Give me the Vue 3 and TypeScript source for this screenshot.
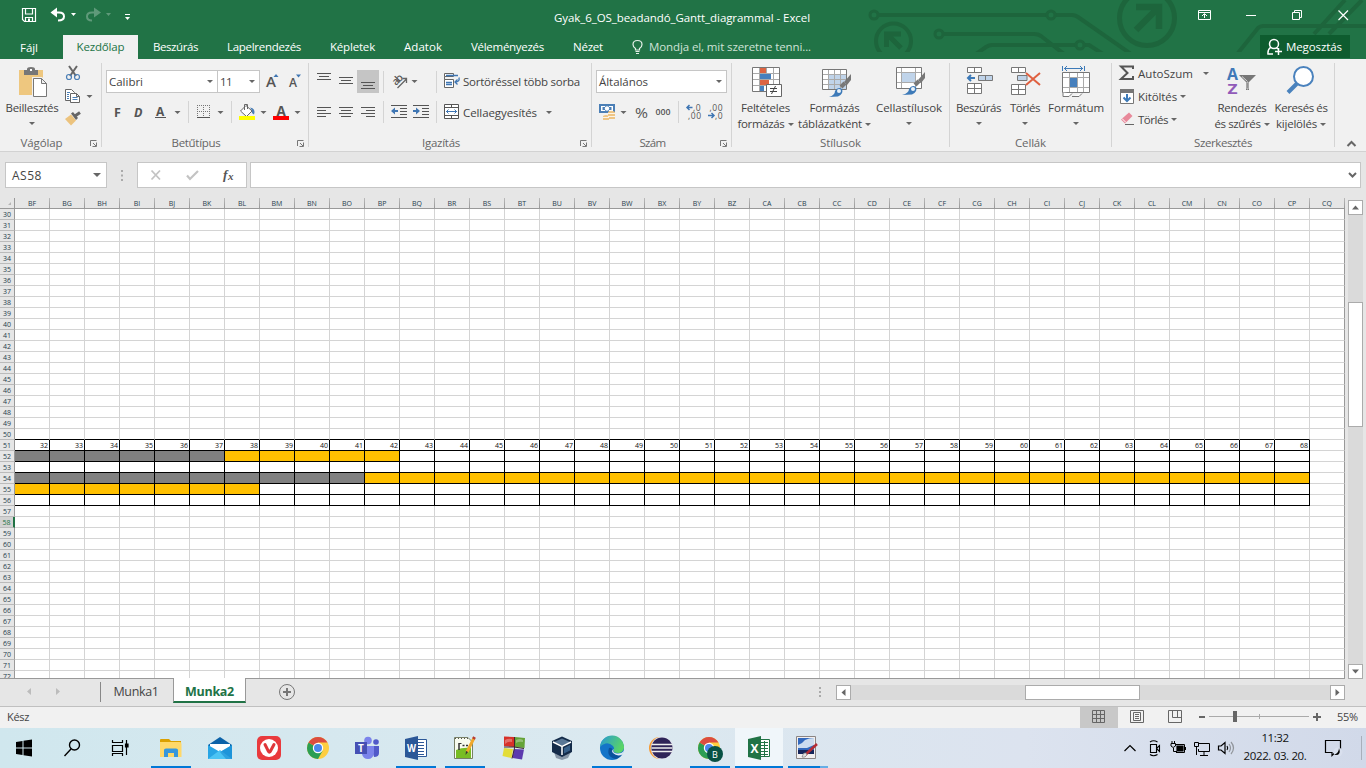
<script setup lang="ts">
import type { Directive } from 'vue'

/* Tracks a label so that it takes the given width in pixels. */
const vFit: Directive<HTMLElement, number> = {
  mounted(el, { value }) {
    const natural = el.getBoundingClientRect().width
    const count = (el.textContent ?? '').trim().length
    el.style.letterSpacing = `${(value - natural) / count}px`
  },
}

/* Icons are drawn in window coordinates; box() cuts the view for one icon. */
const box = (x: number, y: number, width: number, height: number) => ({
  viewBox: `${x} ${y} ${width} ${height}`,
  width,
  height,
})

const columnName = (n: number): string =>
  n > 26 ? columnName(Math.floor((n - 1) / 26)) + columnName(((n - 1) % 26) + 1) : String.fromCharCode(64 + n)

const columns = Array.from({ length: 38 }, (_, i) => columnName(58 + i))
const rows = Array.from({ length: 43 }, (_, i) => 30 + i)

type Span = { from: number; to: number; kind: string }
const bars: Record<number, Span[]> = {
  52: [{ from: 0, to: 5, kind: 'wait' }, { from: 6, to: 10, kind: 'run' }],
  54: [{ from: 0, to: 9, kind: 'wait' }, { from: 10, to: 36, kind: 'run' }],
  55: [{ from: 0, to: 6, kind: 'run' }],
}

const cellClass = (row: number, col: number) => {
  const span = (bars[row] ?? []).find((s) => col >= s.from && col <= s.to)
  return [
    span?.kind,
    { framed: row >= 51 && row <= 56 && col < 37, above: row === 50 && col < 37 },
  ]
}
const cellText = (row: number, col: number) => (row === 51 && col < 37 ? String(32 + col) : '')

const tabs = [
  { name: 'Beszúrás', width: 45, slot: 74 },
  { name: 'Lapelrendezés', width: 74, slot: 103 },
  { name: 'Képletek', width: 45, slot: 74 },
  { name: 'Adatok', width: 38, slot: 67 },
  { name: 'Véleményezés', width: 73, slot: 102 },
  { name: 'Nézet', width: 30, slot: 59 },
]
</script>

<template>
  <div class="window">
    <header class="top">
      <svg class="circuit" v-bind="box(860, 0, 506, 52)">
        <g fill="none" stroke="#1d653c" stroke-width="4">
          <circle cx="874" cy="15" r="4" stroke-width="3" />
          <path d="M878 15H1047M1055 15H1072Q1075 15 1078 17L1131 54" />
          <circle cx="1051" cy="15" r="4" stroke-width="3" />
          <circle cx="939" cy="34" r="4" stroke-width="3" />
          <path d="M943 34H1034Q1038 34 1041 36L1064 54" />
          <path d="M976 54L986 47Q989 45 992 45H1076M1084 45H1089L1103 54" />
          <circle cx="1080" cy="45" r="4" stroke-width="3" />
          <circle cx="893.500" cy="41" r="17.500" />
          <path d="M886.500 47V34H901M887 34L901 48" stroke-width="5" />
          <circle cx="1147" cy="18" r="27.500" stroke-width="5" />
          <path d="M1136 7H1159V29M1159 7L1136 30" stroke-width="6.500" />
          <path d="M1238 53L1258 28Q1260 26 1263 26H1366M1314 34L1345 0M1329 34L1362 0" />
        </g>
      </svg>

      <div class="titlebar">
        <div class="quick">
          <svg v-bind="box(20, 6, 22, 20)"><path d="M22.500 8.500H35.500V21.500H24.500L22.500 19.500ZM25.500 8.500V14H32.500V8.500M25.500 21V17.500H32.500V21" fill="none" stroke="#fff" stroke-width="1.200" /><path d="M28 18.500H30V21H28Z" fill="#fff" /></svg>
          <svg v-bind="box(42, 6, 40, 20)"><path d="M52 12.500H59Q64 12.500 64 16.500Q64 20.500 58 20.500" fill="none" stroke="#fff" stroke-width="2" /><path d="M50.500 12.500L57 7.500V17.500Z" fill="#fff" /><path d="M71 13H76L73.500 16Z" fill="#fff" /></svg>
          <svg v-bind="box(82, 6, 34, 20)" class="faded"><path d="M98 12.500H92Q87 12.500 87 16.500Q87 20.500 92 20.500" fill="none" stroke="#fff" stroke-width="2" /><path d="M101 12.500L94 7.500V17.500Z" fill="#fff" /><path d="M106 13H111L108.500 16Z" fill="#fff" /></svg>
          <svg v-bind="box(116, 6, 20, 20)"><path d="M125 14.500H130" stroke="#fff" /><path d="M125 17H130L127.500 20Z" fill="#fff" /></svg>
        </div>
        <div class="caption-title"><span v-fit="256" class="t">Gyak_6_OS_beadandó_Gantt_diagrammal - Excel</span></div>
        <svg v-bind="box(1190, 0, 176, 34)" class="window-buttons" fill="none" stroke="#fff">
          <path d="M1198.500 10.500H1210.500V19.500H1198.500ZM1198.500 12.500H1210.500M1204.500 18V14M1202 16L1204.500 13.500L1207 16" />
          <path d="M1246 15.500H1256" />
          <path d="M1292.500 12.500H1299.500V19.500H1292.500ZM1294.500 12V10.500H1301.500V17.500H1300" />
          <path d="M1338.500 10.500L1348 20M1348 10.500L1338.500 20" stroke-width="1.200" />
        </svg>
      </div>

      <nav class="tabs">
        <div class="tab file"><span v-fit="18" class="t">Fájl</span></div>
        <div class="tab active"><span v-fit="48" class="t">Kezdőlap</span></div>
        <div v-for="tab in tabs" :key="tab.name" class="tab plain" :style="{ width: tab.slot + 'px' }">
          <span v-fit="tab.width" class="t">{{ tab.name }}</span>
        </div>
        <div class="tell">
          <svg v-bind="box(630, 37, 15, 18)" fill="none" stroke="#e4f0e8" stroke-width="1.200"><path d="M635.500 49V47.500Q633 46 633 43.500Q633 39.500 637.500 39.500Q642 39.500 642 43.500Q642 46 639.500 47.500V49ZM635.500 50.500H639.500M636 52.500H639" /></svg>
          <span v-fit="162" class="t">Mondja el, mit szeretne tenni...</span>
        </div>
        <div class="share">
          <svg v-bind="box(1265, 37, 19, 20)" fill="none" stroke="#fff" stroke-width="1.500"><circle cx="1274" cy="44" r="4.500" /><path d="M1271 47Q1267.500 49.500 1268 54H1273M1276.500 48L1278 49M1278.500 48V55M1275 51.500H1282" /></svg>
          <span v-fit="56" class="t">Megosztás</span>
        </div>
      </nav>
    </header>

    <section class="ribbon">
      <div class="group clipboard">
        <div class="body">
          <div class="big paste">
            <svg v-bind="box(17, 65, 34, 32)">
              <path d="M21 70H45V95H21Z" fill="#eec77f" /><path d="M26 70H40V75H26Z" fill="#777" /><path d="M29 71V69Q29 67 33 67Q37 67 37 69V71" fill="#777" /><path d="M32 69H34V71H32Z" fill="#fff" />
              <path d="M34 77H44L50 83V98H34Z" fill="#f1f1f1" /><path d="M35.500 78.500H43.500L48.500 83.500V96.500H35.500ZM43.500 78.500V83.500H48.500" fill="#fff" stroke="#777" />
            </svg>
            <span v-fit="53" class="t">Beillesztés</span><i class="caret low" />
          </div>
          <div class="small-stack">
            <svg v-bind="box(64, 62, 34, 22)" fill="none"><path d="M69 66L76 76M77 66L70 76" stroke="#666" stroke-width="2" /><circle cx="69" cy="77" r="2.500" stroke="#4b7fb6" stroke-width="1.200" /><circle cx="77" cy="77" r="2.500" stroke="#4b7fb6" stroke-width="1.200" /></svg>
            <svg v-bind="box(64, 85, 34, 22)"><path d="M65.500 89.500H71.500L74.500 92.500V100.500H65.500Z" fill="#fff" stroke="#666" /><path d="M70.500 93.500H76.500L79.500 96.500V102.500H70.500ZM76.500 93.500V96.500H79.500" fill="#fff" stroke="#666" /><path d="M67 92.500H70M67 94.500H69M67 96.500H69M67 98.500H69M72.500 97.500H77.500M72.500 99.500H77.500" stroke="#4b7fb6" /><path d="M86.500 95H92.500L89.500 98Z" fill="#666" /></svg>
            <svg v-bind="box(64, 108, 34, 22)"><path d="M65 119L71 114.500L76 120.500L71 125.500Z" fill="#ecc37e" /><path d="M71 113.500L73 112L78 118L76 120Z" fill="#666" /><path d="M75 116L80 112.500" stroke="#666" stroke-width="3" /></svg>
          </div>
        </div>
        <div class="foot"><span><b v-fit="42" class="t">Vágólap</b></span><svg v-bind="box(85, 138, 16, 11)"><path d="M90.500 146V140.500H96.500M93 143L96 146M96.500 142.500V146.500H92.500" fill="none" stroke="#777" /></svg></div>
      </div>

      <div class="group font">
        <div class="body lines">
          <div class="line">
            <div class="combo family"><span v-fit="34" class="t">Calibri</span><i class="caret" /></div>
            <div class="combo size"><span v-fit="12" class="t">11</span><i class="caret" /></div>
            <svg v-bind="box(260, 70, 46, 24)"><text x="266" y="87" font-size="14" font-weight="600" textLength="10" lengthAdjust="spacingAndGlyphs">A</text><path d="M273.500 77L276 74L278.500 77Z" fill="#3f76b3" /><text x="289" y="87" font-size="12" font-weight="600" textLength="8" lengthAdjust="spacingAndGlyphs">A</text><path d="M296 74.500H301L298.500 77.500Z" fill="#3f76b3" /></svg>
          </div>
          <div class="line second">
            <svg v-bind="box(106, 100, 76, 24)"><text x="114" y="116.500" font-size="12.500" font-weight="700">F</text><text x="134" y="116.500" font-size="12.500" font-weight="700" font-style="italic">D</text><text x="156" y="116" font-size="12" font-weight="700">A</text><path d="M155 117.500H166" stroke="#555" /><path d="M174.500 111H180.500L177.500 114Z" fill="#666" /></svg>
            <i class="rule r6" />
            <svg v-bind="box(189, 100, 42, 24)"><path d="M197.500 105V117M203.500 105V117M209.500 105V117M197 105.500H210M197 111.500H210" stroke="#777" stroke-dasharray="1 1" /><path d="M197 117.500H210" stroke="#555" /><path d="M217.500 111H223.500L220.500 114Z" fill="#666" /></svg>
            <i class="rule" />
            <svg v-bind="box(232, 100, 75, 24)"><path d="M246 105.500L252 111L246.500 116.500L240.500 111ZM244.500 110V104.500H247.500V109" fill="#fff" stroke="#666" /><path d="M250 107.500Q256 108.500 254 114.500Q251 113 252 110.500Z" fill="#4b7fb6" /><path d="M239 116H255V120H239Z" fill="#ffff00" /><path d="M260.500 111H266.500L263.500 114Z" fill="#666" /><text x="276.500" y="115.500" font-size="13.500" font-weight="700">A</text><path d="M273 116H289V120H273Z" fill="#f00" /><path d="M294.500 111H300.500L297.500 114Z" fill="#666" /></svg>
          </div>
        </div>
        <div class="foot"><span><b v-fit="49" class="t">Betűtípus</b></span><svg v-bind="box(292, 138, 16, 11)"><path d="M297.500 146V140.500H303.500M300 143L303 146M303.500 142.500V146.500H299.500" fill="none" stroke="#777" /></svg></div>
      </div>

      <div class="group align">
        <div class="body lines">
          <div class="line">
            <svg v-bind="box(309, 70, 74, 24)"><path d="M357 70H379V93H357Z" fill="#c5c5c5" /><path d="M317 73.500H331M319 76.500H329M317 79.500H331M339 77.500H353M341 80.500H351M339 83.500H353M361 82.500H375M363 85.500H373M361 88.500H375" stroke="#555" /></svg>
            <i class="rule" />
            <svg v-bind="box(384, 70, 52, 24)"><text transform="translate(396 86) rotate(-45)" font-size="10.500" font-weight="600" textLength="11">ab</text><path d="M397.500 88L406.500 79M402.500 78.500H406.500V83" fill="none" stroke="#666" stroke-width="1.300" /><path d="M411.500 80H417.500L414.500 83Z" fill="#666" /></svg>
            <i class="rule" />
            <svg v-bind="box(437, 70, 26, 24)"><path d="M444.500 73.500H453.500V76.500H444.500ZM444.500 79.500H453.500V87.500H444.500ZM444.500 76.500V79.500" fill="#fff" stroke="#666" /><path d="M446 75.500H458M446 82.500H452M446 84.500H452M459 77.500Q460 82 455 82M457.500 79.500L455 82L457.500 84.500" fill="none" stroke="#3f76b3" stroke-width="1.300" /></svg>
            <span v-fit="117" class="t">Sortöréssel több sorba</span>
          </div>
          <div class="line second">
            <svg v-bind="box(309, 100, 74, 24)"><path d="M317 107.500H331M317 110.500H326M317 113.500H331M317 116.500H326M339 107.500H353M341 110.500H351M339 113.500H353M341 116.500H351M361 107.500H375M366 110.500H375M361 113.500H375M366 116.500H375" stroke="#555" /></svg>
            <i class="rule" />
            <svg v-bind="box(384, 100, 52, 24)"><path d="M391 105.500H407M400 108.500H407M400 111.500H407M400 114.500H407M391 117.500H407M413 105.500H429M422 108.500H429M422 111.500H429M422 114.500H429M413 117.500H429" stroke="#555" /><path d="M391 111L395 107.500V110H398V112H395V114.500ZM420 111L416 107.500V110H413V112H416V114.500Z" fill="#3f76b3" /></svg>
            <i class="rule" />
            <svg v-bind="box(437, 100, 26, 24)"><path d="M444.500 104.500H458.500V118.500H444.500ZM444.500 107.500H458.500M444.500 115.500H458.500M451.500 104.500V107.500M451.500 115.500V118.500" fill="#fff" stroke="#555" /><path d="M446 111.500H457M448.500 109.500L446.500 111.500L448.500 113.500M454.500 109.500L456.500 111.500L454.500 113.500" fill="none" stroke="#3f76b3" /></svg>
            <span v-fit="74" class="t lower">Cellaegyesítés</span><i class="caret far" />
          </div>
        </div>
        <div class="foot"><span><b v-fit="38" class="t">Igazítás</b></span><svg v-bind="box(575, 138, 16, 11)"><path d="M580.500 146V140.500H586.500M583 143L586 146M586.500 142.500V146.500H582.500" fill="none" stroke="#777" /></svg></div>
      </div>

      <div class="group number">
        <div class="body lines">
          <div class="line"><div class="combo format"><span v-fit="49" class="t">Általános</span><i class="caret" /></div></div>
          <div class="line second">
            <svg v-bind="box(596, 100, 82, 24)"><path d="M599 104H615V113H599Z" fill="#4b7fb6" /><path d="M601 106H605V107H602.500V110H605V111H601ZM613 106H609V107H611.500V110H609V111H613Z" fill="#fff" /><circle cx="607" cy="108.500" r="2.200" fill="#fff" /><path d="M608 112Q611 109.500 615 112V119H608ZM603 116Q606 114 609 116V120H603Z" fill="#eec585" /><path d="M608 113.500H615M608 116.500H615M603 117.500H609" stroke="#fff" stroke-width=".8" /><path d="M620.500 111H626.500L623.500 114Z" fill="#666" /><text x="635" y="118" font-size="14.500" font-weight="400" textLength="13" lengthAdjust="spacingAndGlyphs">%</text><text x="655.500" y="115" font-size="9" font-weight="600" textLength="15" lengthAdjust="spacingAndGlyphs">000</text></svg>
            <i class="rule" />
            <svg v-bind="box(679, 100, 48, 24)"><g font-size="8.500" font-weight="400"><text x="693" y="110.500" textLength="7.500">,0</text><text x="688" y="118.500" textLength="13">,00</text><text x="709.500" y="110.500" textLength="13">,00</text><text x="715" y="118.500" textLength="7.500">,0</text></g><path d="M687 107.500H692.500M689.500 105L687 107.500L689.500 110M708 115.500H714M711.500 113L714 115.500L711.500 118" fill="none" stroke="#3f76b3" stroke-width="1.500" /></svg>
          </div>
        </div>
        <div class="foot"><span><b v-fit="26" class="t">Szám</b></span><svg v-bind="box(715, 138, 16, 11)"><path d="M720.500 146V140.500H726.500M723 143L726 146M726.500 142.500V146.500H722.500" fill="none" stroke="#777" /></svg></div>
      </div>

      <div class="group styles">
        <div class="body">
          <div class="big w65">
            <svg v-bind="box(749, 65, 34, 32)"><path d="M752.500 67.500H779.500V91.500H752.500Z" fill="#fff" stroke="#777" /><path d="M759.500 68V91M766.500 68V91M773.500 68V91M753 73.500H779M753 79.500H779M753 85.500H779" stroke="#aaa" /><path d="M760 68H766V73H760ZM760 80H769V85H760Z" fill="#dd6442" /><path d="M760 74H771V79H760ZM760 86H764V91H760Z" fill="#4780bd" /><path d="M766.500 84.500H781.500V96.500H766.500Z" fill="#fff" stroke="#666" /><path d="M770 88.500H777M770 91.500H777M775.500 86L771.500 94" stroke="#444" /></svg>
            <span v-fit="49" class="t">Feltételes</span><span class="pair"><span v-fit="47" class="t">formázás</span><i class="caret" /></span>
          </div>
          <div class="big w74">
            <svg v-bind="box(818, 65, 34, 32)"><path d="M822.500 69.500H846.500V89.500H822.500Z" fill="#fff" stroke="#777" /><path d="M829 75H846V89H829Z" fill="#c0d4ea" /><path d="M828.500 70V89M834.500 70V89M840.500 70V89M823 74.500H846M823 79.500H846M823 84.500H846" stroke="#aaa" /><path d="M851 74L844 82L847 85L851 80Z" fill="#777" /><path d="M845 83L841 87" stroke="#777" stroke-width="4" /><path d="M829 97Q835 95 835 91Q838 86 842 89Q844 94 838 96.500Z" fill="#3d7ab8" /><circle cx="839" cy="91" r="2" fill="#e9f1f8" /></svg>
            <span v-fit="50" class="t">Formázás</span><span class="pair"><span v-fit="64" class="t">táblázatként</span><i class="caret" /></span>
          </div>
          <div class="big w74">
            <svg v-bind="box(892, 65, 34, 32)"><path d="M896.500 67.500H921.500V88.500H896.500Z" fill="#fff" stroke="#777" /><path d="M901.500 68V88M915.500 68V88M897 72.500H921M897 82.500H921" stroke="#aaa" /><path d="M902 73H915V82H902Z" fill="#c0d4ea" /><path d="M925 72L918 80L921 83L925 78Z" fill="#777" /><path d="M919 81L915 85" stroke="#777" stroke-width="4" /><path d="M902 95Q909 93 909 89Q912 84 916 87Q918 92 912 94.500Z" fill="#3d7ab8" /><circle cx="913" cy="89" r="2" fill="#e9f1f8" /></svg>
            <span v-fit="66" class="t">Cellastílusok</span><i class="caret low" />
          </div>
        </div>
        <div class="foot"><span><b v-fit="41" class="t">Stílusok</b></span></div>
      </div>

      <div class="group cells">
        <div class="body">
          <div class="big w51">
            <svg v-bind="box(961, 65, 34, 32)"><path d="M966.500 67.500H980.500V72.500H966.500ZM973.500 67.500V72.500M966.500 83.500H980.500V93.500H966.500ZM973.500 83.500V93.500M966.500 88.500H980.500" fill="#fff" stroke="#777" /><path d="M977.500 75.500H991.500V80.500H977.500ZM984.500 75.500V80.500" fill="#bfd3e9" stroke="#777" /><path d="M967 78H974M970 75L967 78L970 81" fill="none" stroke="#3d7ab8" stroke-width="2" /></svg>
            <span v-fit="45" class="t">Beszúrás</span><i class="caret low" />
          </div>
          <div class="big w43">
            <svg v-bind="box(1008, 65, 34, 32)"><path d="M1011.500 67.500H1025.500V72.500H1011.500ZM1018.500 67.500V72.500M1011.500 84.500H1025.500V94.500H1011.500ZM1018.500 84.500V94.500M1011.500 89.500H1025.500" fill="#fff" stroke="#777" /><path d="M1017.500 75.500H1027V80.500H1017.500Z" fill="#bfd3e9" stroke="#777" /><path d="M1026 73L1040 85M1040 73L1026 85" stroke="#df6040" stroke-width="2" /></svg>
            <span v-fit="30" class="t">Törlés</span><i class="caret low" />
          </div>
          <div class="big w60">
            <svg v-bind="box(1059, 65, 34, 32)"><path d="M1062.500 72.500H1089.500V92.500H1062.500Z" fill="#fff" stroke="#777" /><path d="M1069.500 73V92M1077.500 73V92M1083.500 73V92M1063 77.500H1089M1063 87.500H1089" stroke="#aaa" /><path d="M1070 78H1077V87H1070Z" fill="#4780bd" /><path d="M1062.500 66V71M1084.500 66V71M1064 68.500H1083M1067 66L1064.500 68.500L1067 71M1080 66L1082.500 68.500L1080 71" stroke="#3d7ab8" fill="none" /><path d="M1063 92.500V96.500H1069L1072 93.500M1072 96.500H1079L1082 93.500" fill="#fff" stroke="#777" /></svg>
            <span v-fit="56" class="t">Formátum</span><i class="caret low" />
          </div>
        </div>
        <div class="foot"><span><b v-fit="31" class="t">Cellák</b></span></div>
      </div>

      <div class="group editing">
        <div class="body">
          <div class="commands">
            <div class="command"><svg v-bind="box(1119, 62, 19, 23)"><path d="M1133 69V66.500H1121L1127.500 73L1121 79H1133V76" fill="none" stroke="#555" stroke-width="2" /></svg><span v-fit="55" class="t">AutoSzum</span><i class="caret wide" /></div>
            <div class="command"><svg v-bind="box(1119, 85, 19, 23)"><path d="M1120.500 89.500H1133.500V103.500H1120.500Z" fill="#fff" stroke="#777" /><path d="M1120 89H1134V93H1120Z" fill="#777" /><path d="M1127 94V101M1123.500 97.500L1127 101L1130.500 97.500" fill="none" stroke="#3d7ab8" stroke-width="2" /></svg><span v-fit="39" class="t">Kitöltés</span><i class="caret" /></div>
            <div class="command"><svg v-bind="box(1119, 108, 19, 23)"><path d="M1121 119.500L1129 112.500L1132.500 116L1125 123.500Z" fill="#e8899a" /><path d="M1122 118.500L1126 122.500" stroke="#fff" /><path d="M1125 124.500H1134" stroke="#666" /></svg><span v-fit="30" class="t">Törlés</span><i class="caret" /></div>
          </div>
          <div class="big w58">
            <svg v-bind="box(1225, 65, 34, 32)"><text x="1227" y="80" font-size="15.500" font-weight="700" style="fill: #4079b8" textLength="11" lengthAdjust="spacingAndGlyphs">A</text><text x="1227.500" y="94" font-size="15" font-weight="700" style="fill: #915bb9" textLength="10" lengthAdjust="spacingAndGlyphs">Z</text><path d="M1239 75H1256L1249 82V90H1246V82Z" fill="#777" /><path d="M1247 82H1248V89H1247ZM1242 76.500L1247 81" stroke="#fff" stroke-width=".7" /></svg>
            <span v-fit="49" class="t">Rendezés</span><span class="pair"><span v-fit="46" class="t">és szűrés</span><i class="caret" /></span>
          </div>
          <div class="big w59">
            <svg v-bind="box(1284, 65, 34, 32)"><circle cx="1303.500" cy="76.500" r="9.500" fill="#fff" stroke="#4a82bd" stroke-width="2" /><path d="M1297 83.500L1288 92.500" stroke="#4a82bd" stroke-width="4" /></svg>
            <span v-fit="53" class="t">Keresés és</span><span class="pair"><span v-fit="41" class="t">kijelölés</span><i class="caret" /></span>
          </div>
        </div>
        <div class="foot"><span><b v-fit="58" class="t">Szerkesztés</b></span></div>
      </div>
      <svg class="collapse" v-bind="box(1335, 135, 31, 16)"><path d="M1347.500 146L1351.500 142L1355.500 146" fill="none" stroke="#666" stroke-width="2" /></svg>
    </section>

    <section class="formula">
      <div class="namebox"><span v-fit="30" class="t">AS58</span><i class="caret big-caret" /></div>
      <svg v-bind="box(107, 162, 30, 26)"><path d="M121 170H123V172H121ZM121 174.500H123V176.500H121ZM121 179H123V181H121Z" fill="#aaa" /></svg>
      <div class="entry"><svg v-bind="box(138, 163, 108, 24)"><path d="M151.500 170.500L160 179.500M160 170.500L151.500 179.500" stroke="#c3c3c3" stroke-width="1.800" /><path d="M187 175.500L190 179L198 171" fill="none" stroke="#c3c3c3" stroke-width="2.200" /><g font-family="Liberation Serif, serif" font-style="italic" font-weight="700"><text x="223" y="179" class="serif" font-size="13.500">f</text><text x="228" y="180" class="serif" font-size="11">x</text></g></svg></div>
      <div class="field"><svg v-bind="box(1343, 163, 17, 24)"><path d="M1349 173L1352.500 176.500L1356 173" fill="none" stroke="#666" stroke-width="2" /></svg></div>
    </section>

    <section class="sheet">
      <div class="grid">
        <div class="row heads">
          <div class="rowhead corner"><svg v-bind="box(0, 198, 14, 10)"><path d="M11 202V205H8Z" fill="#b5b5b5" /></svg></div>
          <div v-for="name in columns" :key="name" class="colhead">{{ name }}</div>
        </div>
        <div v-for="row in rows" :key="row" class="row">
          <div class="rowhead" :class="{ current: row === 58 }">{{ row }}</div>
          <div v-for="(name, col) in columns" :key="name" class="cell" :class="cellClass(row, col)">{{ cellText(row, col) }}</div>
        </div>
      </div>
      <div class="vscroll">
        <div class="arrow"><svg v-bind="box(0, 0, 13, 13)"><path d="M3 8.500H10L6.500 4.500Z" fill="#666" /></svg></div>
        <div class="vthumb" />
        <div class="arrow last"><svg v-bind="box(0, 0, 13, 13)"><path d="M3 4.500H10L6.500 8.500Z" fill="#666" /></svg></div>
      </div>
    </section>

    <section class="sheets">
      <svg v-bind="box(0, 679, 101, 27)"><path d="M31 688V695L27 691.500ZM56 688V695L60 691.500Z" fill="#bcbcbc" /><path d="M100.500 682V702" stroke="#888" /></svg>
      <div class="sheet-tab"><span v-fit="45" class="t">Munka1</span></div>
      <div class="sheet-tab open"><span v-fit="49" class="t">Munka2</span></div>
      <svg class="add" v-bind="box(277, 682, 20, 20)" fill="none" stroke="#777"><circle cx="287" cy="692" r="7.500" /><path d="M283 692H291M287 688V696" stroke-width="2" /></svg>
      <svg class="grip" v-bind="box(815, 682, 10, 20)"><path d="M819 687H821V689H819ZM819 691H821V693H819ZM819 695H821V697H819Z" fill="#aaa" /></svg>
      <div class="hscroll">
        <div class="arrow"><svg v-bind="box(0, 0, 13, 13)"><path d="M8.500 3V10L4.500 6.500Z" fill="#666" /></svg></div>
        <div class="hthumb" />
        <div class="arrow last"><svg v-bind="box(0, 0, 13, 13)"><path d="M4.500 3V10L8.500 6.500Z" fill="#666" /></svg></div>
      </div>
    </section>

    <section class="status">
      <span v-fit="22" class="t ready">Kész</span>
      <svg v-bind="box(1080, 707, 250, 21)"><path d="M1080 707H1118V728H1080Z" fill="#c8c8c8" /><g fill="none" stroke="#666"><path d="M1092.500 710.500H1104.500V722.500H1092.500ZM1096.500 710V722M1100.500 710V722M1092 714.500H1105M1092 718.500H1105" /><path d="M1130.500 710.500H1143.500V722.500H1130.500ZM1133.500 712.500H1140.500V720.500H1133.500ZM1135 714.500H1139M1135 716.500H1139M1135 718.500H1139" /><path d="M1168.500 710.500H1181.500V722.500H1168.500ZM1172.500 710V717.500H1181M1177.500 710V717" /><path d="M1209 716.500H1309M1259.500 714V719" stroke="#aaa" /><path d="M1199 717H1205M1313 717H1321M1317 713V721" stroke-width="2" /></g><path d="M1233 711H1237V722H1233Z" fill="#666" /></svg>
      <span v-fit="21" class="t percent">55%</span>
    </section>

    <footer class="taskbar">
      <div class="slot sys"><svg v-bind="box(12, 736, 24, 24)"><path d="M16 742L22.500 741V747.500H16ZM23.500 740.800L32 739.500V747.500H23.500ZM16 748.500H22.500V755L16 754ZM23.500 748.500H32V756.500L23.500 755.300Z" /></svg></div>
      <div class="slot sys"><svg v-bind="box(60, 736, 24, 24)" fill="none" stroke="#000" stroke-width="1.400"><circle cx="74.500" cy="745" r="5" /><path d="M71 749L64.500 756" /></svg></div>
      <div class="slot sys"><svg v-bind="box(108, 736, 24, 24)" fill="none" stroke="#000" stroke-width="1.200"><path d="M112.500 740V742.500H122.500V740M112.500 745.500H122.500V751.500H112.500ZM112.500 756V753.500H122.500V756M126.500 740V755" /><path d="M125.500 744H128V747H125.500Z" fill="#000" /></svg></div>
      <div class="slot first running"><svg v-bind="box(158, 736, 26, 24)"><path d="M160 740Q160 739 161 739H169L171 741H181V745H160Z" fill="#dba000" /><path d="M160 742H180Q181.500 742 181.500 744V757H160Z" fill="#ffd869" /><path d="M164 757V750Q164 748.500 166 748.500H176Q178 748.500 178 750V757H174V753H168V757Z" fill="#3797dc" /></svg></div>
      <div class="slot"><svg v-bind="box(207, 736, 26, 24)"><path d="M208 745L220 737L232 745V748H208Z" fill="#0b62a8" /><path d="M210 744H230V752H210Z" fill="#fff" /><path d="M208 745L220 752L232 745V759H208Z" fill="#27a5e5" /><path d="M208 759L220 750L232 759Z" fill="#4bc4f4" /><path d="M220 752L232 745V759H226Z" fill="#1687d0" opacity=".55" /></svg></div>
      <div class="slot"><svg v-bind="box(256, 736, 26, 24)"><rect x="257" y="736" width="24" height="24" rx="5" fill="#e93a3d" /><circle cx="269" cy="748" r="9" fill="#fff" /><path d="M265 744.500L268.500 751.500Q269.500 753 270.500 751L274 744.500" fill="none" stroke="#df3639" stroke-width="3" stroke-linecap="round" /></svg></div>
      <div class="slot"><svg v-bind="box(305, 736, 26, 24)"><circle cx="318" cy="748" r="11" fill="#fdce41" /><path d="M318 748L308.500 742.500A11 11 0 0 0 318 759L322.500 751Z" fill="#2b9e54" /><path d="M318 748L308.500 742.500A11 11 0 0 1 327.500 742.500H318Z" fill="#db4d40" /><circle cx="318" cy="748" r="5.200" fill="#fff" /><circle cx="318" cy="748" r="4" fill="#4a87ed" /></svg></div>
      <div class="slot"><svg v-bind="box(354, 736, 26, 24)"><circle cx="376" cy="742" r="2.800" fill="#5059c9" /><path d="M371 746H379V753Q379 757 374 757Z" fill="#5059c9" /><circle cx="368" cy="740.500" r="3.800" fill="#7b83eb" /><path d="M362 746H374V753Q373 759 368 759Q363 759 362 754Z" fill="#7b83eb" /><path d="M355 742H367V754H355Z" fill="#4650b4" /><text x="361" y="752" text-anchor="middle" font-size="10" font-weight="700" style="fill: #fff">T</text></svg></div>
      <div class="slot running"><svg v-bind="box(403, 736, 26, 24)"><path d="M416 739.500H426.500V756.500H416Z" fill="#fff" stroke="#2b5797" /><path d="M418 742.500H424M418 745.500H424M418 748.500H424M418 751.500H424M418 754.500H424" stroke="#2b5797" /><path d="M405 739L418 736V760L405 757Z" fill="#2b5797" /><text x="407" y="752" font-size="10" font-weight="700" style="fill: #fff" textLength="9" lengthAdjust="spacingAndGlyphs">W</text></svg></div>
      <div class="slot running"><svg v-bind="box(452, 736, 26, 24)"><path d="M454.500 737.500H468L472.500 742V758.500H454.500Z" fill="#f8fbef" stroke="#788066" /><path d="M456 750Q463 747 471 748V758H456Z" fill="#78bd24" /><path d="M459 743V750M462.500 745.500H464.500M466 745.500H468" stroke="#333" stroke-width="1.500" /><path d="M459 743.500H461.500" stroke="#333" /><path d="M455 738.500H470" stroke="#555" stroke-dasharray="1 2" /><path d="M474 738L467 752" stroke="#f0a82b" stroke-width="3" /><path d="M473.500 739L474.500 737" stroke="#b73c35" stroke-width="3" /><path d="M466 751L465.500 755L468 752Z" fill="#333" /></svg></div>
      <div class="slot"><svg v-bind="box(501, 736, 26, 24)"><path d="M504 736.500L514 737V747L504 746Z" fill="#d73129" /><path d="M515 737L525 738L524.500 748L515 747Z" fill="#65a337" /><path d="M504 748L513 749L511.500 758L502.500 756Z" fill="#e3dd38" /><path d="M514 749L524 749.500L522 759.500L512.500 758Z" fill="#5c3aae" /><path d="M514.500 737V748L512 758.500M504 747H514L524 748.500" fill="none" stroke="#3e2530" /><path d="M505 740Q508 738 512 739V742Q508 741 505 744ZM516 740Q520 738 523 740V742Q519 741 516 743Z" fill="#fff" opacity=".3" /></svg></div>
      <div class="slot"><svg v-bind="box(550, 736, 26, 24)"><path d="M554 752L562 748L571 752L568 758L562 760L556 758Z" fill="#8796a7" /><path d="M552 741L562 736.500L572 741V752L562 757L552 752Z" fill="#142b49" /><path d="M554 742L562 745.500L570 742L562 738.500Z" fill="#5a7796" /><path d="M553 742L562 746.500L571 742M562 747V755" fill="none" stroke="#fff" stroke-width="1.500" /><path d="M564 748L570 745V750.500L564 753.500Z" fill="#375f89" /></svg></div>
      <div class="slot running"><svg v-bind="box(599, 736, 26, 24)"><defs><linearGradient id="edge-top" x1="0" x2="1" y2=".4"><stop stop-color="#2797d6" /><stop offset="1" stop-color="#59d467" /></linearGradient></defs><circle cx="612" cy="748" r="12" fill="#1474c8" /><path d="M600 747A12 12 0 0 1 624 748Q623 753 618 753Q613 753 613.500 750Q615 748 613 746Q607 740 600 747Z" fill="url(#edge-top)" /><path d="M609 748Q606 757 616 759Q621 757 622 754Q615 756 613 751Q612 747 609 748Z" fill="#0a529d" /><path d="M613.500 749Q612 753 617 753.500Q621 754 624 751L622.500 754.500Q617 757 613 753Q611 751 613.500 749Z" fill="#e0ecf3" /></svg></div>
      <div class="slot"><svg v-bind="box(648, 736, 26, 24)"><circle cx="660" cy="748" r="11" fill="#f79a31" /><circle cx="662" cy="748" r="11.300" fill="#e2e6ef" /><circle cx="662" cy="748" r="10.600" fill="#2f2458" /><path d="M652 744.500H672M651.500 748H672.500M652 751.500H672" stroke="#eee" stroke-width="1.700" /></svg></div>
      <div class="slot running"><svg v-bind="box(697, 735, 28, 26)"><circle cx="710" cy="748" r="11" fill="#fdce41" /><path d="M710 748L700.500 742.500A11 11 0 0 0 710 759L714.500 751Z" fill="#2b9e54" /><path d="M710 748L700.500 742.500A11 11 0 0 1 719.500 742.500H710Z" fill="#db4d40" /><circle cx="710" cy="748" r="5.200" fill="#fff" /><circle cx="710" cy="748" r="4" fill="#4a87ed" /><circle cx="716" cy="754" r="8" fill="#075144" /><text x="716" y="757.500" text-anchor="middle" font-size="9" style="fill: #fff">B</text></svg></div>
      <div class="slot running focused"><svg v-bind="box(746, 736, 26, 24)"><path d="M759 739.500H769.500V756.500H759Z" fill="#fff" stroke="#217346" /><path d="M761 742.500H768M761 745.500H768M761 748.500H768M761 751.500H768M761 754.500H768M764.500 741V756" stroke="#217346" /><path d="M748 739L761 736V760L748 757Z" fill="#217346" /><text x="754.500" y="752.500" text-anchor="middle" font-size="12" font-weight="700" style="fill: #fff">X</text></svg></div>
      <div class="slot running grouped"><svg v-bind="box(795, 736, 26, 24)"><path d="M796.500 736.500H815.500V758.500H796.500Z" fill="#f2efef" stroke="#8a8585" /><path d="M798 738H814V753H798Z" fill="#3268bd" /><path d="M798 745Q803 743 805 740Q809 738 814 738V745L807 748H798Z" fill="#cbdcf0" /><path d="M798 750H814V754H798Z" fill="#15265c" /><path d="M817 744L804 756" stroke="#b42d35" stroke-width="2.500" /><path d="M806 753Q803 752 802 757Q806 758 807 754Z" fill="#e3e3e3" stroke="#555" stroke-width=".5" /></svg></div>
      <svg class="tray" v-bind="box(1118, 736, 120, 24)" fill="none" stroke="#000" stroke-width="1.200">
        <path d="M1124.500 751L1130 745.500L1135.500 751" />
        <path d="M1150.500 744.500H1156.500V752.500H1150.500ZM1157 748L1159.500 745.500V751.500L1157 749M1150 742Q1153.500 739.500 1157.500 742M1150 754.500Q1153.500 757 1157.500 754.500" stroke-width="1.100" />
        <path d="M1176 744.500H1184.500V752.500H1176M1185.500 747V750M1171 743.500H1175.500V746Q1173 749 1171 746ZM1172 743V741M1174.500 743V741M1173.500 748V751.500H1177" stroke-width="1" /><path d="M1177 746H1183V751H1177Z" fill="#000" />
        <path d="M1199 743.500H1209.500V751.500H1198.500V749M1204 752V755.500M1200 755.500H1208M1194.500 742.500H1198.500V746.500H1194.500ZM1196.500 747V755" stroke-width="1" />
        <path d="M1218.500 746V750H1221L1225 753.500V742.500L1221 746ZM1227 746Q1228.500 748 1227 750" /><path d="M1229 744Q1232 748 1229 752M1231 742Q1236 748 1231 754" stroke="#91959b" />
      </svg>
      <div class="clock"><span v-fit="27" class="t">11:32</span><span v-fit="63" class="t">2022. 03. 20.</span></div>
      <svg class="notice" v-bind="box(1322, 736, 44, 24)"><path d="M1325.500 740.500H1340.500V752.500H1335L1332 755.500V752.500H1325.500Z" fill="none" stroke="#000" stroke-width="1.200" /><circle cx="1338" cy="752" r="4.500" fill="#d9e0ee" /><path d="M1339 748Q1342 756 1334 755Q1339 753 1339 748Z" /></svg>
    </footer>
  </div>
</template>

<style>
html,
body {
  margin: 0;
  overflow: hidden;
}
</style>

<style scoped>
.window {
  width: 1366px;
  height: 768px;
  display: flex;
  flex-direction: column;
  overflow: hidden;
  background: #e6e6e6;
  color: #444;
  font: 11.5px/16px 'Open Sans', 'Noto Sans', sans-serif;
}
.window * { box-sizing: border-box; }
svg { display: block; flex: none; overflow: visible; }
svg text { fill: #555; font-family: 'Open Sans', sans-serif; }
svg text.serif { fill: #555; font-family: 'Liberation Serif', serif; }
.t { display: inline-block; flex: none; white-space: nowrap; font-weight: inherit; }
.open .t { font-weight: 700; }

.top { position: relative; height: 59px; flex: none; background: #217346; color: #fff; }
.circuit { position: absolute; top: 0; right: 0; overflow: hidden; }
.titlebar { position: relative; height: 35px; display: flex; }
.quick { display: flex; width: 534px; padding: 0 0 0 20px; flex: none; }
.quick svg { margin-top: 6px; }
.faded { opacity: .28; }
.caption-title { padding: 10px 0 0 20px; flex: 1; }
.tabs { position: relative; height: 24px; display: flex; }
.tab { display: flex; justify-content: center; align-items: center; flex: none; }
.tab.file { width: 63px; padding: 1px 5px 0 0; }
.tab.active { width: 75px; background: #f1f1f1; color: #217346; }
.tab.plain { padding-left: 1px; }
.tell { display: flex; align-items: center; margin-left: 14px; gap: 4px; color: #cfe2d7; }
.tell svg { margin-left: -1px; }
.share { display: flex; align-items: center; width: 90px; height: 23px; margin: 0 16px 0 auto; padding-left: 5px; gap: 2px; background: #0e5c2f; }

.ribbon { display: flex; flex: none; height: 93px; background: #f1f1f1; border-bottom: 1px solid #d2d2d2; }
.group { display: flex; flex-direction: column; flex: none; background: linear-gradient(#d4d4d4, #d4d4d4) right 4px / 1px 84px no-repeat; }
.clipboard { width: 102px; }
.font { width: 207px; }
.align { width: 283px; }
.number { width: 140px; }
.styles { width: 218px; }
.cells { width: 162px; }
.editing { width: 223px; }
.group:not(.font, .number, .align) .body { display: flex; }
.body { height: 76px; }
.foot { display: flex; height: 16px; padding-right: 1px; color: #666; }
.foot span { flex: 1; display: flex; justify-content: center; }
.foot b { font-weight: 400; }
.foot svg { margin: 3px 0 0 2px; }
.big { display: flex; flex-direction: column; align-items: center; padding-top: 6px; flex: none; }
.big > svg { margin-bottom: 3px; }
.pair { display: flex; align-items: center; gap: 3px; }
.caret { flex: none; width: 0; height: 0; border: 3px solid transparent; border-top-color: #666; border-bottom: 0; }
.caret.low { margin-top: 6px; }
.paste { width: 64px; padding-right: 0; }
.w65 { width: 65px; margin-left: 1px; }
.w74 { width: 73px; }
.styles .w74:last-child { width: 76px; }
.w51 { width: 51px; margin-left: 3px; }
.w43 { width: 42px; }
.w60 { width: 60px; }
.w58 { width: 58px; }
.w59 { width: 60px; }
.small-stack { display: flex; flex-direction: column; gap: 1px; padding-top: 3px; }
.lines { padding-top: 11px; }
.line { display: flex; align-items: center; height: 24px; }
.second { margin-top: 6px; }
.lower { margin-top: 1px; }
.font .line, .number .line { padding-left: 4px; }
.rule { width: 1px; height: 22px; background: #d4d4d4; }
.r6 { margin-left: 6px; }
.combo { display: flex; align-items: center; justify-content: space-between; height: 23px; margin-bottom: 1px; padding: 0 4px 0 2px; background: #fff; border: 1px solid #c6c6c6; }
.family { width: 112px; }
.size { width: 43px; margin-left: -1px; }
.format { width: 131px; }
.far { margin-left: 9px; }
.commands { width: 101px; padding: 3px 0 0 7px; }
.command { display: flex; align-items: center; height: 23px; }
.command .caret { margin-left: 3px; }
.command .caret.wide { margin-left: 10px; }
.collapse { margin: auto 0 0; }

.formula { display: flex; flex: none; height: 46px; padding: 10px 5px 0; }
.namebox, .entry, .field { height: 26px; background: #fff; border: 1px solid #c6c6c6; }
.namebox { width: 102px; display: flex; align-items: center; justify-content: space-between; padding: 1px 5px 0 6px; font-size: 12px; }
.big-caret { border-width: 4px 4px 0; margin-bottom: 2px; }
.entry { width: 110px; }
.field { flex: 1; margin-left: 3px; display: flex; justify-content: flex-end; }

.sheet { display: flex; height: 481px; flex: none; }
.grid { width: 1345px; height: 481px; overflow: hidden; border-bottom: 1px solid #999; background: #fff; }
.row { display: flex; height: 11px; font-size: 7px; line-height: 11px; }
.rowhead { width: 15px; flex: none; text-align: center; background: #e6e6e6; color: #1f3d4c; border-right: 1px solid #999; border-bottom: 1px solid #bbb; }
.current { background: #d2d2d2; color: #217346; border-right: 2px solid #217346; }
.colhead { width: 35px; flex: none; padding-right: 1px; text-align: center; background: linear-gradient(#bbb, #999) right / 1px 100% no-repeat #e6e6e6; color: #1f3d4c; border-bottom: 1px solid #999; }
.corner { border-bottom-color: #999; }
.cell { width: 35px; flex: none; padding-right: 1px; text-align: right; color: #111; border: solid #d4d4d4; border-width: 0 1px 1px 0; }
.cell:last-child { border-right-color: #999; }
.framed { border-color: #000; }
.above { border-bottom-color: #000; }
.wait { background: #808080; }
.run { background: #ffc000; }

.arrow { display: flex; flex: none; width: 15px; height: 15px; background: #fff; border: 1px solid #ababab; }
.vscroll { display: flex; flex-direction: column; width: 15px; height: 479px; margin: 2px 0 0 3px; background: #dadada; }
.vthumb { height: 125px; margin-top: 87px; background: #fff; border: 1px solid #ababab; }
.arrow.last { margin: auto 0 0 auto; }

.sheets { display: flex; flex: none; height: 28px; border-bottom: 1px solid #c0c0c0; }
.sheet-tab { display: flex; justify-content: center; width: 72px; padding: 5px 2px 0 0; font-size: 12.5px; }
.sheet-tab.open { width: 73px; height: 25px; margin-top: -1px; padding: 6px 0 0; background: #fff; color: #217346; border: solid #999; border-width: 0 1px; border-bottom: 2px solid #217346; z-index: 1; }
.add { margin: 3px 0 0 31px; }
.grip { margin: 3px 0 0 518px; }
.hscroll { display: flex; width: 509px; height: 15px; margin: 6px 0 0 11px; background: #dadada; }
.hthumb { width: 115px; margin-left: 174px; background: #fff; border: 1px solid #ababab; }

.status { display: flex; flex: none; height: 21px; background: #f1f1f1; font-size: 11px; }
.ready { margin: 2px 1051px 0 7px; }
.percent { margin: 2px 0 0 7px; }

.taskbar { display: flex; align-items: center; height: 40px; flex: none; background: linear-gradient(90deg, #d0e7ee, #dbe9f0 45%, #dce3ef 75%, #d1d9e9); }
.slot { display: flex; justify-content: center; align-items: center; width: 49px; height: 40px; flex: none; }
.sys { width: 48px; }
.first { margin-left: 2px; }
.running { background: linear-gradient(#0078d7, #0078d7) 5px 38px / 40px 2px no-repeat; }
.focused { background: linear-gradient(#0078d7, #0078d7) 1px 38px / 48px 2px no-repeat, linear-gradient(#f0f6fa, #f0f6fa) 1px 0 / 48px 38px no-repeat; }
.grouped { background: linear-gradient(90deg, #0078d7 32px, #66aee6 32px) 5px 38px / 40px 2px no-repeat; }
.tray { margin-left: auto; }
.clock { display: flex; flex-direction: column; align-items: center; width: 76px; gap: 2px; padding: 0 2px 2px 0; color: #111; font-size: 11.5px; }
.notice { margin-left: 8px; background: linear-gradient(#a8afbb, #a8afbb) 39px 0 / 1px 100% no-repeat; }
</style>
